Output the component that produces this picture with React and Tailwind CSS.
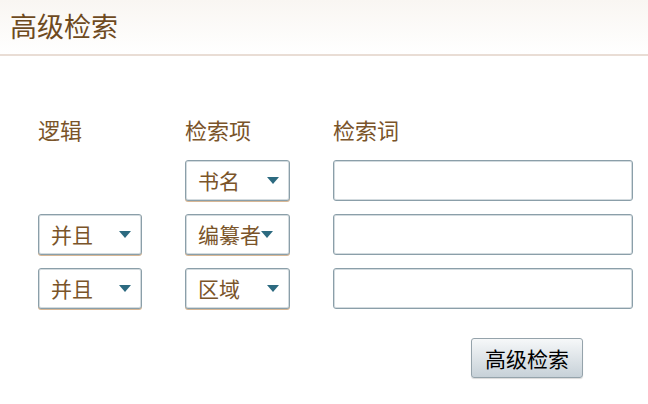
import React from "react";

const font = { fontFamily: '"Noto Sans CJK SC", "Noto Sans", sans-serif' };

function Arrow() {
  return (
    <svg width="12" height="7" viewBox="0 0 12 7" className="shrink-0">
      <path d="M0 0 H12 L6 7 Z" fill="#2c6a80" />
    </svg>
  );
}

function SelectBox({ label, wide, tight }) {
  return (
    <div
      className={`flex items-center h-[41px] border border-[#8b9fa9] rounded-[3px] bg-white shadow-[inset_0_0_0_1px_#d3dbdf,0_1px_0_#d8b795] ${wide ? "w-[105px] pl-[12px]" : "w-[104px] pl-[12px]"} ${tight ? "pr-[4px]" : "pr-[10px]"}`}
    >
      <span className="text-[21px] leading-none text-[#7a5429] whitespace-nowrap">{label}</span>
      <span className={tight ? "" : "ml-auto"}>
        <Arrow />
      </span>
    </div>
  );
}

function TextBox() {
  return (
    <div className="h-[41px] w-[300px] border border-[#8b9fa9] rounded-[3px] bg-white shadow-[inset_0_0_0_1px_#d3dbdf]" />
  );
}

export default function App() {
  return (
    <div className="w-[648px] h-[404px] bg-white overflow-hidden" style={font}>
      <div className="h-[56px] border-b-2 border-[#e9ddd5] bg-gradient-to-b from-[#f9f6f2] to-white pl-[10px] pt-[10px]">
        <h1 className="text-[27px] leading-[32px] text-[#6e4a1e] font-normal">高级检索</h1>
      </div>
      <div className="pl-[38px] pt-[60px]">
        <div className="grid grid-cols-[104px_105px_300px] gap-x-[43px] gap-y-[13px]">
          <div className="text-[22px] leading-[26px] text-[#7a5429] mb-[5px]">逻辑</div>
          <div className="text-[22px] leading-[26px] text-[#7a5429] mb-[5px]">检索项</div>
          <div className="text-[22px] leading-[26px] text-[#7a5429] mb-[5px]">检索词</div>

          <div />
          <SelectBox label="书名" wide />
          <TextBox />

          <SelectBox label="并且" />
          <SelectBox label="编纂者" wide tight />
          <TextBox />

          <SelectBox label="并且" />
          <SelectBox label="区域" wide />
          <TextBox />
        </div>
        <div className="flex pl-[433px] pt-[29px]">
          <button className="w-[112px] h-[40px] border border-[#95a3ab] rounded-[3px] bg-gradient-to-b from-[#f6f8f9] to-[#c7d1d8] text-[21px] leading-none text-black shadow-[0_1px_1px_rgba(0,0,0,0.15)]">
            高级检索
          </button>
        </div>
      </div>
    </div>
  );
}
